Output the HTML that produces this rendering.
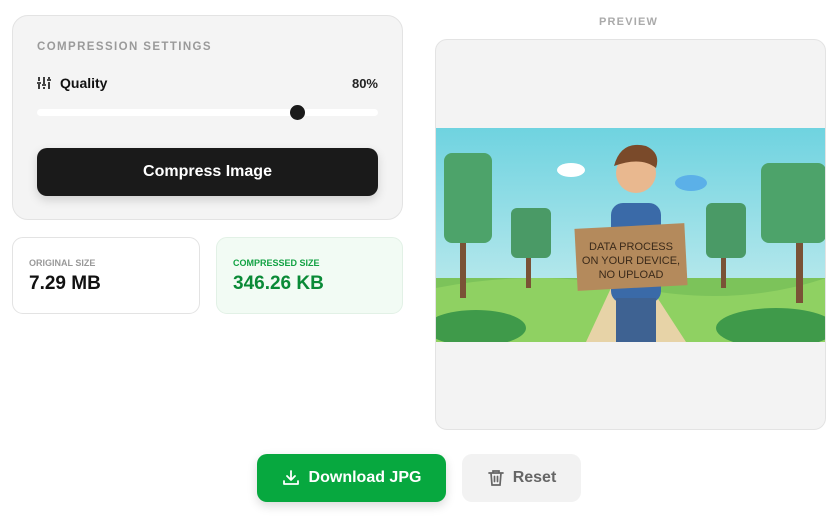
<!DOCTYPE html>
<html><head><meta charset="utf-8"><style>
*{box-sizing:border-box;margin:0;padding:0}
body{width:837px;height:532px;background:#fff;font-family:"Liberation Sans",sans-serif;position:relative;overflow:hidden}
.card{position:absolute;left:12px;top:15px;width:391px;height:205px;background:#f4f4f4;border:1px solid #e3e3e3;border-radius:16px}
.ttl{position:absolute;left:24px;top:25px;font-size:11.5px;letter-spacing:1.4px;color:#9a9a9a;font-weight:bold}
.q{position:absolute;left:24px;top:59px;font-size:14px;font-weight:bold;color:#111;display:flex;align-items:center;gap:9px}
.pct{position:absolute;right:24px;top:60px;font-size:13px;font-weight:bold;color:#222}
.track{position:absolute;left:24px;top:93px;width:341px;height:7px;background:#fff;border-radius:4px}
.thumb{position:absolute;left:277px;top:89px;width:15px;height:15px;border-radius:50%;background:#1a1a1a}
.btn{position:absolute;left:24px;top:132px;width:341px;height:48px;background:#1a1a1a;border-radius:10px;color:#fff;font-weight:bold;font-size:16px;text-align:center;line-height:48px;box-shadow:0 4px 10px rgba(0,0,0,.15)}
.sz{position:absolute;top:237px;height:77px;border:1px solid #e3e3e3;border-radius:11px;background:#fff}
.sz .l{position:absolute;left:16px;top:20px;font-size:9px;font-weight:bold;color:#999}
.sz .v{position:absolute;left:16px;top:35px;font-size:19px;font-weight:bold;color:#111}
.pl{position:absolute;left:599px;top:16px;font-size:11px;font-weight:bold;letter-spacing:1.2px;color:#aaa}
.pv{position:absolute;left:435px;top:39px;width:391px;height:391px;background:#f3f3f3;border:1px solid #e3e3e3;border-radius:12px;overflow:hidden}
.dl{position:absolute;left:257px;top:454px;width:189px;height:48px;background:#07a83f;border-radius:10px;color:#fff;font-weight:bold;font-size:16px;display:flex;align-items:center;justify-content:center;gap:9px;box-shadow:0 4px 10px rgba(0,0,0,.15)}
.rs{position:absolute;left:462px;top:454px;width:119px;height:48px;background:#f2f2f2;border-radius:10px;color:#666;font-weight:bold;font-size:16px;display:flex;align-items:center;justify-content:center;gap:8px}
</style></head><body>
<div class="card">
<div class="ttl">COMPRESSION SETTINGS</div>
<div class="q"><svg width="14" height="14" viewBox="0 0 14 14" stroke="#111" stroke-width="1.6" fill="none"><path d="M2 1v4M2 8v5M7 1v7M7 11v2M12 1v2M12 6v7M0 7h4M5 9h4M10 4h4"/></svg>Quality</div>
<div class="pct">80%</div>
<div class="track"></div><div class="thumb"></div>
<div class="btn">Compress Image</div>
</div>
<div class="sz" style="left:12px;width:188px"><div class="l">ORIGINAL SIZE</div><div class="v">7.29 MB</div></div>
<div class="sz" style="left:216px;width:187px;background:#f2fbf4;border-color:#e2f1e6"><div class="l" style="color:#12a243">COMPRESSED SIZE</div><div class="v" style="color:#0a8a37">346.26 KB</div></div>
<div class="pl">PREVIEW</div>
<div class="pv">
<svg style="position:absolute;left:0;top:88px" width="390" height="214" viewBox="0 0 390 214">
<defs><linearGradient id="s" x1="0" y1="0" x2="0" y2="1"><stop offset="0" stop-color="#6fd3e0"/><stop offset="1" stop-color="#cfeff0"/></linearGradient></defs>
<rect width="390" height="214" fill="url(#s)"/>
<rect y="150" width="390" height="64" fill="#7cc35a"/>
<path d="M0 160 Q100 140 200 160 T390 150 V214 H0z" fill="#8fd162"/>
<path d="M150 214 L175 160 H215 L250 214z" fill="#e7d3a7"/>
<ellipse cx="40" cy="200" rx="50" ry="18" fill="#3f9a4a"/><ellipse cx="340" cy="200" rx="60" ry="20" fill="#3f9a4a"/>
<rect x="24" y="90" width="6" height="80" fill="#7a5236"/><rect x="8" y="25" width="48" height="90" rx="8" fill="#4da36a"/>
<rect x="90" y="110" width="5" height="50" fill="#7a5236"/><rect x="75" y="80" width="40" height="50" rx="6" fill="#4a9a66"/>
<rect x="360" y="80" width="7" height="95" fill="#7a5236"/><rect x="325" y="35" width="65" height="80" rx="8" fill="#4da36a"/>
<rect x="285" y="110" width="5" height="50" fill="#7a5236"/><rect x="270" y="75" width="40" height="55" rx="6" fill="#4a9a66"/>
<ellipse cx="255" cy="55" rx="16" ry="8" fill="#5bb0e8"/><ellipse cx="135" cy="42" rx="14" ry="7" fill="#fff"/>
<rect x="175" y="75" width="50" height="100" rx="12" fill="#3a6aa8"/>
<rect x="180" y="170" width="40" height="44" fill="#3e6292"/>
<circle cx="200" cy="45" r="20" fill="#e9b88f"/><path d="M178 38 Q185 12 210 18 Q225 25 220 40 Q205 28 178 38z" fill="#7a4a2a"/>
<rect x="140" y="98" width="110" height="62" fill="#b48a5c" transform="rotate(-3 195 129)"/>
<text x="195" y="122" font-size="11" text-anchor="middle" fill="#3b2a1a" font-family="Liberation Sans">DATA PROCESS</text>
<text x="195" y="136" font-size="11" text-anchor="middle" fill="#3b2a1a" font-family="Liberation Sans">ON YOUR DEVICE,</text>
<text x="195" y="150" font-size="11" text-anchor="middle" fill="#3b2a1a" font-family="Liberation Sans">NO UPLOAD</text>
</svg>
</div>
<div class="dl"><svg width="18" height="18" viewBox="0 0 18 18" stroke="#fff" stroke-width="1.8" fill="none" stroke-linecap="round" stroke-linejoin="round"><path d="M9 2v9M5 7l4 4 4-4M2 12v3h14v-3"/></svg>Download JPG</div>
<div class="rs"><svg width="18" height="18" viewBox="0 0 18 18" stroke="#666" stroke-width="1.7" fill="none" stroke-linecap="round"><path d="M2 4h14M6 4V2h6v2M4 4l1 12h8l1-12M7.5 7.5v5M10.5 7.5v5"/></svg>Reset</div>
</body></html>
